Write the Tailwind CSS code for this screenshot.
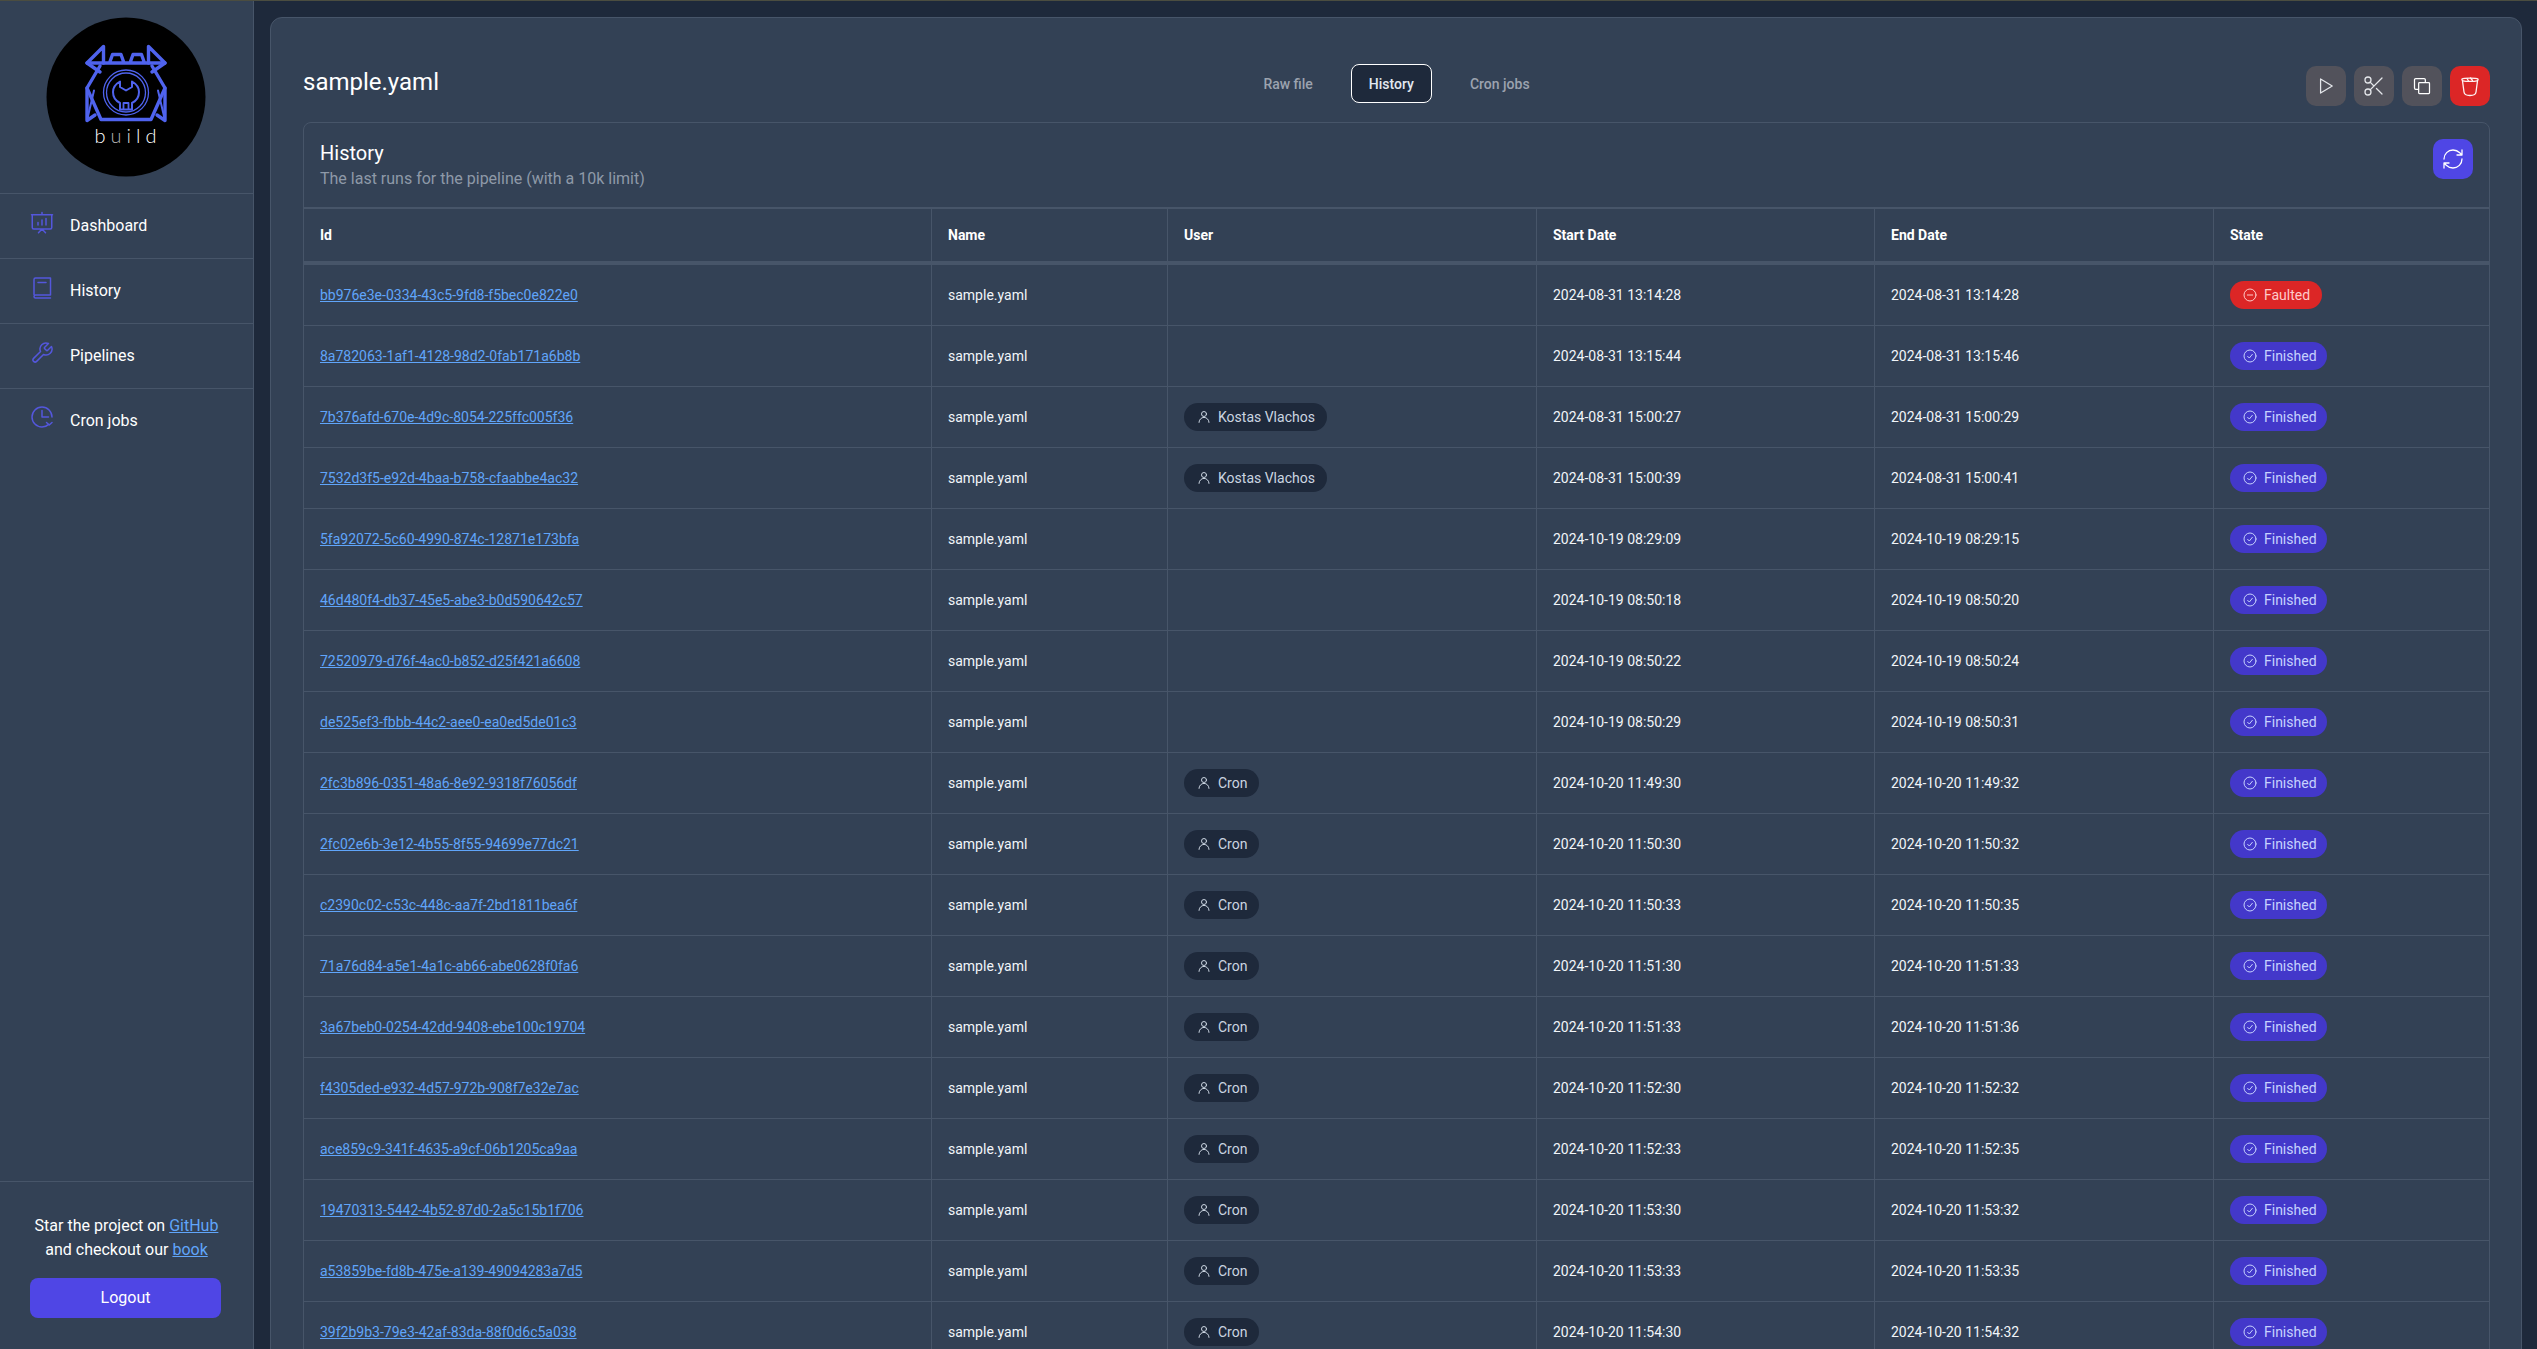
<!DOCTYPE html>
<html lang="en">
<head>
<meta charset="utf-8">
<title>sample.yaml</title>
<script src="https://cdn.jsdelivr.net/npm/@tailwindcss/browser@4"></script>
</head>
<body class="h-screen overflow-hidden bg-[#1e293b] font-['Roboto',sans-serif] text-white">
<div class="h-px bg-[#4b4d40]"></div>
<div class="flex h-[1348px]">
  <aside class="flex w-[254px] shrink-0 flex-col border-r border-[#475569] bg-[#334155]">
    <div class="flex h-[192px] items-start justify-center pt-[16px]">
      <svg class="ml-[-1px] h-[160px] w-[160px]" viewBox="46 17 160 160" role="img" aria-label="build logo">
        <circle cx="126" cy="97" r="79.5" fill="#000"/>
        <g fill="none" stroke="#4f63ee" stroke-width="3.400" stroke-linejoin="round" stroke-linecap="round">
          <path d="M103.5 46.5V63H87L103.500 46.5ZM148.5 46.5V63H165L148.500 46.5Z"/>
          <path d="M87 63l13 9M165 63l-13 9"/>
          <path d="M109.500 63l3-8.500h8.500l3 8.500M130 63l3-8.500h8.500l3 8.500M103.500 63h45"/>
          <path d="M100 66L87 88l14 31.500h50L165 88 152 66"/>
          <path d="M87 88v32.500l8-5.500M165 88v32.500l-8-5.500"/>
          <path d="M87 120.500l7-30M165 120.500l-7-30" stroke-width="2"/>
        </g>
        <g fill="none" stroke="#4f63ee" stroke-linejoin="round">
          <circle cx="126" cy="92.500" r="22.500" stroke-width="1.300"/>
          <circle cx="126" cy="92.500" r="19.500" stroke-width="1.300"/>
          <path d="M120 81.500v5.500l6 3.500 6-3.500v-5.500c4.500 2.500 7 6 7 10.500 0 5.500-3 9-7 11v6.500h-12V103c-4-2-7-5.500-7-11 0-4.500 2.500-8 7-10.500Z" stroke-width="2"/>
          <path d="M123.500 110v-7h5v7" stroke-width="1.800"/>
        </g>
        <text x="128" y="143" text-anchor="middle" font-family="Lato, Roboto, sans-serif" font-size="20" font-weight="300" letter-spacing="5" fill="#ffffff">b<tspan fill="#b0b0b0">u</tspan><tspan fill="#dddddd">i</tspan>ld</text>
      </svg>
    </div>
    <nav class="flex flex-col">
      <a class="flex h-[65px] items-center gap-4 border-t border-[#475569] pl-[30px] text-base">
        <svg class="mb-[7px] h-6 w-6 text-[#5457dc]" fill="none" viewBox="0 0 24 24" stroke="currentColor" stroke-width="1.500" stroke-linecap="round" stroke-linejoin="round"><path d="M1.500 3.750h21M2.250 3.750v12.750a1.500 1.500 0 0 0 1.500 1.500h16.500a1.500 1.500 0 0 0 1.500-1.500V3.750M12 1.500v2.250M12 18l-3.500 3.750M12 18l3.500 3.750M8 14v-2.500M12 14V9M16 14V7.500"/></svg>
        <span>Dashboard</span>
      </a>
      <a class="flex h-[65px] items-center gap-4 border-t border-[#475569] pl-[30px] text-base">
        <svg class="mb-[7px] h-6 w-6 text-[#5457dc]" fill="none" viewBox="0 0 24 24" stroke="currentColor" stroke-width="1.500" stroke-linecap="round" stroke-linejoin="round"><path d="M4 18.500V3.500a1.500 1.500 0 0 1 1.500-1.500H20.500v17H5.500A1.500 1.500 0 0 0 4 20.500 1.500 1.500 0 0 0 5.500 22h15M8 6.500h8"/></svg>
        <span>History</span>
      </a>
      <a class="flex h-[65px] items-center gap-4 border-t border-[#475569] pl-[30px] text-base">
        <svg class="mb-[7px] h-6 w-6 text-[#5457dc]" fill="none" viewBox="0 0 24 24" stroke="currentColor" stroke-width="1.500" stroke-linecap="round" stroke-linejoin="round"><path d="M14.700 6.300a1 1 0 0 0 0 1.400l1.600 1.600a1 1 0 0 0 1.400 0l3.770-3.770a6 6 0 0 1-7.940 7.940l-6.910 6.910a2.120 2.120 0 0 1-3-3l6.910-6.910a6 6 0 0 1 7.940-7.940l-3.760 3.760z"/></svg>
        <span>Pipelines</span>
      </a>
      <a class="flex h-[65px] items-center gap-4 border-y border-[#475569] border-b-transparent pl-[30px] text-base">
        <svg class="mb-[7px] h-6 w-6 text-[#5457dc]" fill="none" viewBox="0 0 24 24" stroke="currentColor" stroke-width="1.500" stroke-linecap="round" stroke-linejoin="round"><path d="M22 12A10 10 0 1 0 12 22c2.500 0 5-1 6.700-2.600M12 5.500V12h6.500M22 17.500l-2.800 2.500-2.700-2.500"/></svg>
        <span>Cron jobs</span>
      </a>
    </nav>
    <div class="mt-auto flex h-[168px] flex-col border-t border-[#475569] px-[30px] pt-[32px] text-center">
      <p class="whitespace-nowrap text-base leading-6">Star the project on <a class="text-[#60a5fa] underline">GitHub</a><br>and checkout our <a class="text-[#60a5fa] underline">book</a></p>
      <button class="mt-4 h-10 w-[191px] rounded-lg bg-[#4f46e5] text-base text-white">Logout</button>
    </div>
  </aside>

  <main class="min-w-0 flex-1 pl-4 pr-[15px] pt-4">
    <section class="h-[1400px] rounded-xl border border-[#475569] bg-[#334155] pl-8 pr-[31px] pt-[46px]">
      <header class="grid h-[58px] grid-cols-[1fr_auto_1fr]">
        <h1 class="text-2xl leading-9">sample.yaml</h1>
        <div class="flex h-[39px] items-center gap-5 text-sm font-medium">
          <button class="h-[39px] px-[18px] text-[#9ca3af]">Raw file</button>
          <button class="h-[39px] rounded-lg border border-white bg-[#1e293b] px-[17px] text-[#e2e8f0]">History</button>
          <button class="h-[39px] px-[18px] text-[#9ca3af]">Cron jobs</button>
        </div>
        <div class="mt-[2px] flex h-10 justify-end gap-2">
          <button class="flex h-10 w-10 items-center justify-center rounded-[10px] bg-[#52525b] text-[#e5e7eb]">
            <svg class="h-5 w-5" fill="none" viewBox="0 0 24 24" stroke="currentColor" stroke-width="1.500" stroke-linejoin="round"><path d="M5.500 3.500 19.500 12 5.500 20.500Z"/></svg>
          </button>
          <button class="flex h-10 w-10 items-center justify-center rounded-[10px] bg-[#52525b] text-[#e5e7eb]">
            <svg class="h-6 w-6" fill="none" viewBox="0 0 24 24" stroke="currentColor" stroke-width="1.300" stroke-linecap="round" stroke-linejoin="round"><circle cx="6" cy="6" r="3"/><circle cx="6" cy="18" r="3"/><path d="M20 4 8.100 15.900M14.470 14.480 20 20M8.100 8.100 12 12"/></svg>
          </button>
          <button class="flex h-10 w-10 items-center justify-center rounded-[10px] bg-[#52525b] text-white">
            <svg class="h-5 w-5" fill="none" viewBox="0 0 24 24" stroke="currentColor" stroke-width="1.500" stroke-linejoin="round"><path d="M8 16H4.500A1.500 1.500 0 0 1 3 14.500v-10A1.500 1.500 0 0 1 4.500 3h10A1.500 1.500 0 0 1 16 4.500V8"/><rect x="8" y="8" width="13" height="13" rx="1"/></svg>
          </button>
          <button class="flex h-10 w-10 items-center justify-center rounded-[10px] bg-[#dc2626] text-[#fef2f2]">
            <svg class="h-6 w-6" fill="none" viewBox="0 0 24 24" stroke="currentColor" stroke-width="1.300" stroke-linecap="round" stroke-linejoin="round"><path d="M4 5c2-1.300 14-1.300 16 0 .3 1-.3 1.600-1 1.800-3 .8-11 .8-14 0C4.300 6.600 3.700 6 4 5Z"/><path d="M4.500 7l1.500 11c.2 2.500 2 3.500 6 3.500s5.800-1 6-3.500l1.500-11M9 4.500l1.500 2.500M12.500 4l2 2.500"/></svg>
          </button>
        </div>
      </header>

      <div class="overflow-hidden rounded-lg border border-[#475569]">
        <div class="flex h-[84px] items-start justify-between pl-4 pr-4 pt-4">
          <div>
            <h2 class="text-xl leading-7">History</h2>
            <p class="text-base leading-6 text-[#8e99a8]">The last runs for the pipeline (with a 10k limit)</p>
          </div>
          <button class="flex h-10 w-10 items-center justify-center rounded-[10px] bg-[#4f46e5] text-white">
            <svg class="h-6 w-6" fill="none" viewBox="0 0 24 24" stroke="currentColor" stroke-width="1.300" stroke-linecap="round" stroke-linejoin="round"><path d="M3 12a9 9 0 0 1 9-9 9.750 9.750 0 0 1 6.740 2.740L21 8M21 3v5h-5M21 12a9 9 0 0 1-9 9 9.750 9.750 0 0 1-6.740-2.740L3 16M8 16H3v5"/></svg>
          </button>
        </div>
        <table class="w-full table-fixed border-separate border-spacing-0 border-t-2 border-[#475569] text-left text-sm">
          <colgroup>
            <col class="w-[628px]"><col class="w-[236px]"><col class="w-[369px]"><col class="w-[338px]"><col class="w-[339px]"><col>
          </colgroup>
          <thead>
            <tr class="h-[56px] font-bold">
              <th class="border-b-4 border-r border-[#475569] pl-4">Id</th>
              <th class="border-b-4 border-r border-[#475569] pl-4">Name</th>
              <th class="border-b-4 border-r border-[#475569] pl-4">User</th>
              <th class="border-b-4 border-r border-[#475569] pl-4">Start Date</th>
              <th class="border-b-4 border-r border-[#475569] pl-4">End Date</th>
              <th class="border-b-4 border-[#475569] pl-4">State</th>
            </tr>
          </thead>
          <tbody id="rows" class="text-[#f1f5f9]">
            <tr class="h-[61px]"><td class="border-b border-r border-[#475569] pl-4"><a class="text-[#60a5fa] underline">bb976e3e-0334-43c5-9fd8-f5bec0e822e0</a></td><td class="border-b border-r border-[#475569] pl-4">sample.yaml</td><td class="border-b border-r border-[#475569] pl-4"></td><td class="border-b border-r border-[#475569] pl-4">2024-08-31 13:14:28</td><td class="border-b border-r border-[#475569] pl-4">2024-08-31 13:14:28</td><td class="border-b border-[#475569] pl-4"><span class="inline-flex h-7 items-center gap-1.5 rounded-full bg-[#dc2626] pl-3 pr-3 text-[#fecaca]"><svg class="h-4 w-4" fill="none" viewBox="0 0 24 24" stroke="currentColor" stroke-width="1.500" stroke-linecap="round"><circle cx="12" cy="12" r="9"/><path d="M8 12h8"/></svg>Faulted</span></td></tr>
            <tr class="h-[61px]"><td class="border-b border-r border-[#475569] pl-4"><a class="text-[#60a5fa] underline">8a782063-1af1-4128-98d2-0fab171a6b8b</a></td><td class="border-b border-r border-[#475569] pl-4">sample.yaml</td><td class="border-b border-r border-[#475569] pl-4"></td><td class="border-b border-r border-[#475569] pl-4">2024-08-31 13:15:44</td><td class="border-b border-r border-[#475569] pl-4">2024-08-31 13:15:46</td><td class="border-b border-[#475569] pl-4"><span class="inline-flex h-7 items-center gap-1.5 rounded-full bg-[#4338ca] pl-3 pr-[10px] text-[#c7d2fe]"><svg class="h-4 w-4" fill="none" viewBox="0 0 24 24" stroke="currentColor" stroke-width="1.500" stroke-linecap="round" stroke-linejoin="round"><circle cx="12" cy="12" r="9"/><path d="m8.500 12.500 2.500 2.500 4.500-5.500"/></svg>Finished</span></td></tr>
            <tr class="h-[61px]"><td class="border-b border-r border-[#475569] pl-4"><a class="text-[#60a5fa] underline">7b376afd-670e-4d9c-8054-225ffc005f36</a></td><td class="border-b border-r border-[#475569] pl-4">sample.yaml</td><td class="border-b border-r border-[#475569] pl-4"><span class="inline-flex h-7 items-center gap-1.5 rounded-full bg-[#1e293b] px-3 text-[#cbd5e1]"><svg class="h-4 w-4" fill="none" viewBox="0 0 24 24" stroke="currentColor" stroke-width="1.500" stroke-linecap="round" stroke-linejoin="round"><circle cx="12" cy="7.500" r="3.750"/><path d="M4.500 20.100a7.500 7.500 0 0 1 15 0"/></svg>Kostas Vlachos</span></td><td class="border-b border-r border-[#475569] pl-4">2024-08-31 15:00:27</td><td class="border-b border-r border-[#475569] pl-4">2024-08-31 15:00:29</td><td class="border-b border-[#475569] pl-4"><span class="inline-flex h-7 items-center gap-1.5 rounded-full bg-[#4338ca] pl-3 pr-[10px] text-[#c7d2fe]"><svg class="h-4 w-4" fill="none" viewBox="0 0 24 24" stroke="currentColor" stroke-width="1.500" stroke-linecap="round" stroke-linejoin="round"><circle cx="12" cy="12" r="9"/><path d="m8.500 12.500 2.500 2.500 4.500-5.500"/></svg>Finished</span></td></tr>
            <tr class="h-[61px]"><td class="border-b border-r border-[#475569] pl-4"><a class="text-[#60a5fa] underline">7532d3f5-e92d-4baa-b758-cfaabbe4ac32</a></td><td class="border-b border-r border-[#475569] pl-4">sample.yaml</td><td class="border-b border-r border-[#475569] pl-4"><span class="inline-flex h-7 items-center gap-1.5 rounded-full bg-[#1e293b] px-3 text-[#cbd5e1]"><svg class="h-4 w-4" fill="none" viewBox="0 0 24 24" stroke="currentColor" stroke-width="1.500" stroke-linecap="round" stroke-linejoin="round"><circle cx="12" cy="7.500" r="3.750"/><path d="M4.500 20.100a7.500 7.500 0 0 1 15 0"/></svg>Kostas Vlachos</span></td><td class="border-b border-r border-[#475569] pl-4">2024-08-31 15:00:39</td><td class="border-b border-r border-[#475569] pl-4">2024-08-31 15:00:41</td><td class="border-b border-[#475569] pl-4"><span class="inline-flex h-7 items-center gap-1.5 rounded-full bg-[#4338ca] pl-3 pr-[10px] text-[#c7d2fe]"><svg class="h-4 w-4" fill="none" viewBox="0 0 24 24" stroke="currentColor" stroke-width="1.500" stroke-linecap="round" stroke-linejoin="round"><circle cx="12" cy="12" r="9"/><path d="m8.500 12.500 2.500 2.500 4.500-5.500"/></svg>Finished</span></td></tr>
          </tbody>
        </table>
      </div>
    </section>
  </main>
</div>
<script>
const finished = document.querySelector('#rows tr:nth-child(2) td:last-child').innerHTML;
const person = document.querySelector('#rows tr:nth-child(3) td:nth-child(3) svg').outerHTML;
const userBadge = n => n ? '<span class="inline-flex h-7 items-center gap-1.5 rounded-full bg-[#1e293b] px-3 text-[#cbd5e1]">' + person + n + '</span>' : '';
const c = 'border-b border-r border-[#475569] pl-4';
const data = [
['5fa92072-5c60-4990-874c-12871e173bfa','','2024-10-19 08:29:09','2024-10-19 08:29:15'],
['46d480f4-db37-45e5-abe3-b0d590642c57','','2024-10-19 08:50:18','2024-10-19 08:50:20'],
['72520979-d76f-4ac0-b852-d25f421a6608','','2024-10-19 08:50:22','2024-10-19 08:50:24'],
['de525ef3-fbbb-44c2-aee0-ea0ed5de01c3','','2024-10-19 08:50:29','2024-10-19 08:50:31'],
['2fc3b896-0351-48a6-8e92-9318f76056df','Cron','2024-10-20 11:49:30','2024-10-20 11:49:32'],
['2fc02e6b-3e12-4b55-8f55-94699e77dc21','Cron','2024-10-20 11:50:30','2024-10-20 11:50:32'],
['c2390c02-c53c-448c-aa7f-2bd1811bea6f','Cron','2024-10-20 11:50:33','2024-10-20 11:50:35'],
['71a76d84-a5e1-4a1c-ab66-abe0628f0fa6','Cron','2024-10-20 11:51:30','2024-10-20 11:51:33'],
['3a67beb0-0254-42dd-9408-ebe100c19704','Cron','2024-10-20 11:51:33','2024-10-20 11:51:36'],
['f4305ded-e932-4d57-972b-908f7e32e7ac','Cron','2024-10-20 11:52:30','2024-10-20 11:52:32'],
['ace859c9-341f-4635-a9cf-06b1205ca9aa','Cron','2024-10-20 11:52:33','2024-10-20 11:52:35'],
['19470313-5442-4b52-87d0-2a5c15b1f706','Cron','2024-10-20 11:53:30','2024-10-20 11:53:32'],
['a53859be-fd8b-475e-a139-49094283a7d5','Cron','2024-10-20 11:53:33','2024-10-20 11:53:35'],
['39f2b9b3-79e3-42af-83da-88f0d6c5a038','Cron','2024-10-20 11:54:30','2024-10-20 11:54:32']
];
document.getElementById('rows').insertAdjacentHTML('beforeend', data.map(r => '<tr class="h-[61px]"><td class="'+c+'"><a class="text-[#60a5fa] underline">'+r[0]+'</a></td><td class="'+c+'">sample.yaml</td><td class="'+c+'">'+userBadge(r[1])+'</td><td class="'+c+'">'+r[2]+'</td><td class="'+c+'">'+r[3]+'</td><td class="border-b border-[#475569] pl-4">'+finished+'</td></tr>').join(''));
</script>
</body>
</html>
